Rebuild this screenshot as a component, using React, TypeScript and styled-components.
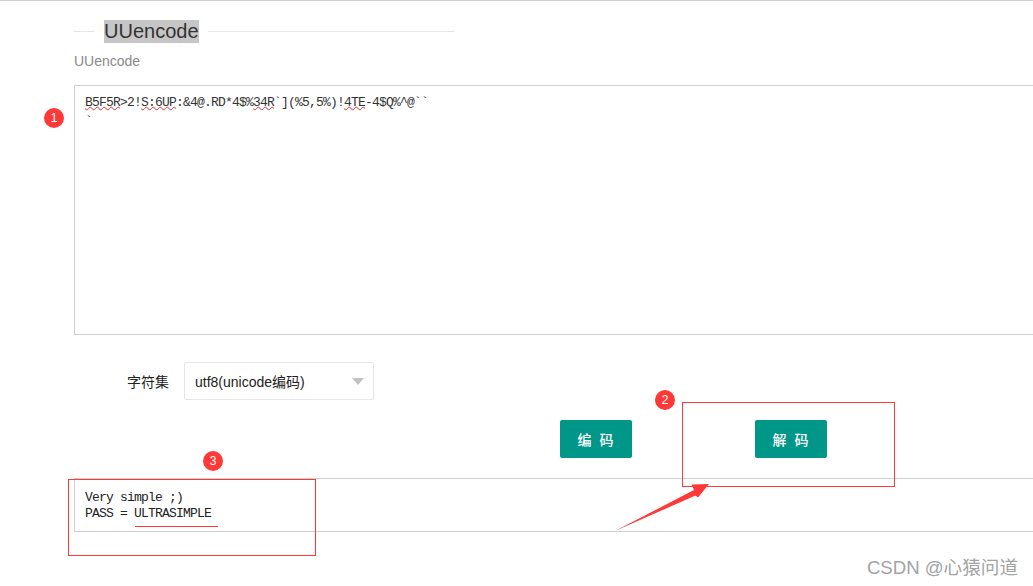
import React from "react";
import styled, { createGlobalStyle } from "styled-components";

const Global = createGlobalStyle`
  html, body { margin: 0; padding: 0; background: #fff; }
  body { font-family: "Liberation Sans", "Noto Sans CJK SC", sans-serif; }
`;

const Page = styled.div`
  position: relative;
  width: 1033px;
  height: 586px;
  overflow: hidden;
  box-sizing: border-box;
  border-top: 1px solid #d0d0d0;
  padding: 19px 0 0 74px;
  background: #fff;
`;

const Legend = styled.div`
  display: flex;
  align-items: center;
  width: 380px;
  height: 23px;
  &::before, &::after {
    content: "";
    height: 1px;
    background: #e6e6e6;
  }
  &::before { width: 20px; margin-right: 10px; }
  &::after { flex: 1; margin-left: 9px; }
`;

const LegendText = styled.span`
  font-size: 20px;
  line-height: 23px;
  color: #333;
  background: #c6c6c6;
`;

const Subtitle = styled.div`
  margin-top: 8px;
  font-size: 14px;
  line-height: 20px;
  color: #8a8a8a;
`;

const CodeBox = styled.div`
  box-sizing: border-box;
  width: 1000px;
  padding: 9px 10px;
  border: 1px solid #d0d0d0;
  background: #fff;
  font-family: "Liberation Mono", monospace;
  font-size: 13px;
  letter-spacing: -0.8px;
  line-height: 16px;
  color: #333;
  white-space: pre;
`;

const InputBox = styled(CodeBox)`
  margin-top: 14px;
  height: 250px;
`;

const ResultBox = styled(CodeBox)`
  margin-top: 20px;
  height: 54px;
  padding-top: 11px;
  color: #222;
`;

const CodeLine = styled.div`
  height: 16px;
`;

const TickLine = styled(CodeLine)`
  padding-top: 3px;
`;

const Misspelled = styled.span`
  text-decoration: underline wavy #e03030 1px;
  text-underline-offset: 0px;
`;

const FormRow = styled.div`
  display: flex;
  align-items: center;
  margin-top: 27px;
`;

const FieldLabel = styled.label`
  box-sizing: border-box;
  width: 110px;
  padding-right: 15px;
  text-align: right;
  font-size: 14px;
  color: #222;
`;

const SelectBox = styled.div`
  box-sizing: border-box;
  display: flex;
  align-items: center;
  justify-content: space-between;
  width: 190px;
  height: 38px;
  padding: 0 9px 0 10px;
  border: 1px solid #e6e6e6;
  border-radius: 2px;
  font-size: 14px;
  color: #222;
`;

const Caret = styled.span`
  width: 0;
  height: 0;
  border-left: 6px solid transparent;
  border-right: 6px solid transparent;
  border-top: 7px solid #c2c2c2;
`;

const ButtonRow = styled.div`
  display: flex;
  gap: 123px;
  margin: 20px 0 0 486px;
`;

const ActionButton = styled.button`
  width: 72px;
  height: 38px;
  padding: 0 0 0 1px;
  border: none;
  border-radius: 2px;
  background: #009688;
  color: #fff;
  font-family: inherit;
  font-size: 14px;
  font-weight: 500;
  letter-spacing: 2px;
`;

const Badge = styled.span<{ $x: number; $y: number }>`
  position: absolute;
  left: ${p => p.$x}px;
  top: ${p => p.$y}px;
  width: 20px;
  height: 20px;
  border-radius: 50%;
  background: #ff3838;
  color: #fff;
  font-size: 12px;
  line-height: 20px;
  text-align: center;
`;

const Frame = styled.div<{ $x: number; $y: number; $w: number; $h: number }>`
  position: absolute;
  box-sizing: border-box;
  left: ${p => p.$x}px;
  top: ${p => p.$y}px;
  width: ${p => p.$w}px;
  height: ${p => p.$h}px;
  border: 1px solid #ff3838;
`;

const RedLine = styled.div`
  position: absolute;
  left: 135px;
  top: 525px;
  width: 83px;
  height: 1px;
  background: #ff3838;
`;

const Arrow = styled.svg`
  position: absolute;
  left: 0;
  top: -1px;
  width: 1033px;
  height: 586px;
  pointer-events: none;
`;

const Watermark = styled.div`
  position: absolute;
  right: 15px;
  top: 554px;
  font-size: 18.6px;
  line-height: 25px;
  color: #a3a3a3;
  white-space: nowrap;
`;

export default function App() {
  return (
    <Page>
      <Global />
      <Legend>
        <LegendText>UUencode</LegendText>
      </Legend>
      <Subtitle>UUencode</Subtitle>
      <InputBox>
        <CodeLine>
          <Misspelled>B5F5R</Misspelled>{">2!"}<Misspelled>S:6UP</Misspelled>{":&4@.RD*4$%"}<Misspelled>34R</Misspelled>{"`](%5,5%)!"}<Misspelled>4TE</Misspelled>{"-4$Q%^@``"}
        </CodeLine>
        <TickLine>{"`"}</TickLine>
      </InputBox>
      <FormRow>
        <FieldLabel>字符集</FieldLabel>
        <SelectBox>
          utf8(unicode编码)
          <Caret />
        </SelectBox>
      </FormRow>
      <ButtonRow>
        <ActionButton>编 码</ActionButton>
        <ActionButton>解 码</ActionButton>
      </ButtonRow>
      <ResultBox>
        <CodeLine>Very simple ;)</CodeLine>
        <CodeLine>PASS = ULTRASIMPLE</CodeLine>
      </ResultBox>

      <Badge $x={44} $y={107}>1</Badge>
      <Badge $x={655} $y={389}>2</Badge>
      <Badge $x={203} $y={450}>3</Badge>
      <Frame $x={682} $y={401} $w={213} $h={85} />
      <Frame $x={68} $y={478} $w={248} $h={77} />
      <RedLine />
      <Arrow viewBox="0 0 1033 586">
        <polygon points="615,531 694,490 691.5,484.5 709,484 698,497.5 695.5,495.5" fill="#ff3838" />
      </Arrow>
      <Watermark>CSDN @心猿问道</Watermark>
    </Page>
  );
}
